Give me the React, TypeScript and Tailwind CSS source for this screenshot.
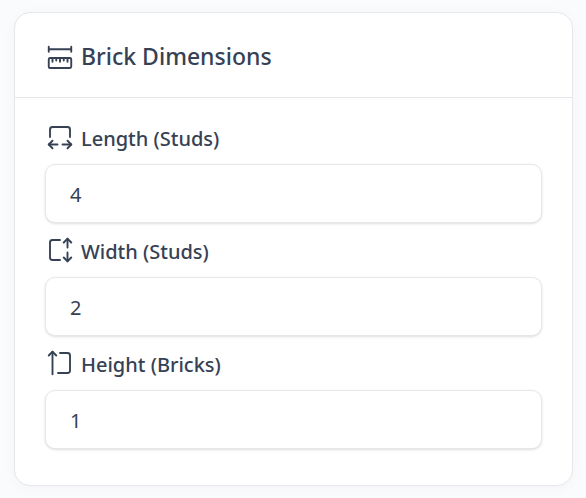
import { useId, useState, type ReactNode } from 'react'

function Icon({ children }: { children: ReactNode }) {
  return (
    <svg
      viewBox="0 0 24 24"
      fill="none"
      stroke="currentColor"
      strokeWidth={1.5}
      strokeLinecap="round"
      strokeLinejoin="round"
      className="size-[30px] flex-shrink-0"
      aria-hidden="true"
    >
      {children}
    </svg>
  )
}

function RulerIcon() {
  return (
    <Icon>
      <path d="M19.875 12c.621 0 1.125 .512 1.125 1.143v5.714c0 .631 -.504 1.143 -1.125 1.143h-15.875a1 1 0 0 1 -1 -1v-5.857c0 -.631 .504 -1.143 1.125 -1.143h15.75" />
      <path d="M9 12v2M6 12v3M12 12v3M18 12v3M15 12v2" />
      <path d="M3 3v4M3 5h18M21 3v4" />
    </Icon>
  )
}

function LengthIcon() {
  return (
    <Icon>
      <path d="M4 12v-6a2 2 0 0 1 2 -2h12a2 2 0 0 1 2 2v6" />
      <path d="M10 18h-7M21 18h-7" />
      <path d="M6 15l-3 3l3 3M18 15l3 3l-3 3" />
    </Icon>
  )
}

function WidthIcon() {
  return (
    <Icon>
      <path d="M12 20h-6a2 2 0 0 1 -2 -2v-12a2 2 0 0 1 2 -2h6" />
      <path d="M18 14v7M18 3v7" />
      <path d="M15 18l3 3l3 -3M15 6l3 -3l3 3" />
    </Icon>
  )
}

function HeightIcon() {
  return (
    <Icon>
      <path d="M10.4 20h7.6a2 2 0 0 0 2 -2v-12a2 2 0 0 0 -2 -2h-6" />
      <path d="M6 21v-18" />
      <path d="M3 6l3 -3l3 3" />
    </Icon>
  )
}

type FieldProps = {
  icon: ReactNode
  label: string
  value: string
  onChange: (value: string) => void
}

function Field({ icon, label, value, onChange }: FieldProps) {
  const id = useId()

  return (
    <div className="flex flex-col gap-2">
      <label htmlFor={id} className="flex items-start gap-1.5 text-xl/[34px] font-medium">
        {icon}
        {label}
      </label>
      <input
        id={id}
        type="text"
        inputMode="numeric"
        value={value}
        onChange={e => onChange(e.target.value)}
        className="w-full px-6 pt-4 pb-[13px] rounded-[10px] border border-gray-200 bg-white text-xl/[28px] shadow-sm"
      />
    </div>
  )
}

export default function App() {
  const [length, setLength] = useState('4')
  const [width, setWidth] = useState('2')
  const [height, setHeight] = useState('1')

  return (
    <main className="min-h-screen bg-[#fafbfd] px-3.5 py-3 pr-[13px] font-['Noto_Sans','Open_Sans',sans-serif] text-gray-700">
      <section className="rounded-2xl border border-gray-200 bg-white shadow-[0_2px_14px_rgba(15,23,42,0.03)]">
        <header className="flex items-start gap-1.5 border-b border-gray-200 px-[30px] pt-[30px] pb-6">
          <RulerIcon />
          <h2 className="text-[23px]/[26px] font-medium">Brick Dimensions</h2>
        </header>
        <div className="flex flex-col gap-3 px-[30px] pt-6 pb-9">
          <Field icon={<LengthIcon />} label="Length (Studs)" value={length} onChange={setLength} />
          <Field icon={<WidthIcon />} label="Width (Studs)" value={width} onChange={setWidth} />
          <Field icon={<HeightIcon />} label="Height (Bricks)" value={height} onChange={setHeight} />
        </div>
      </section>
    </main>
  )
}
